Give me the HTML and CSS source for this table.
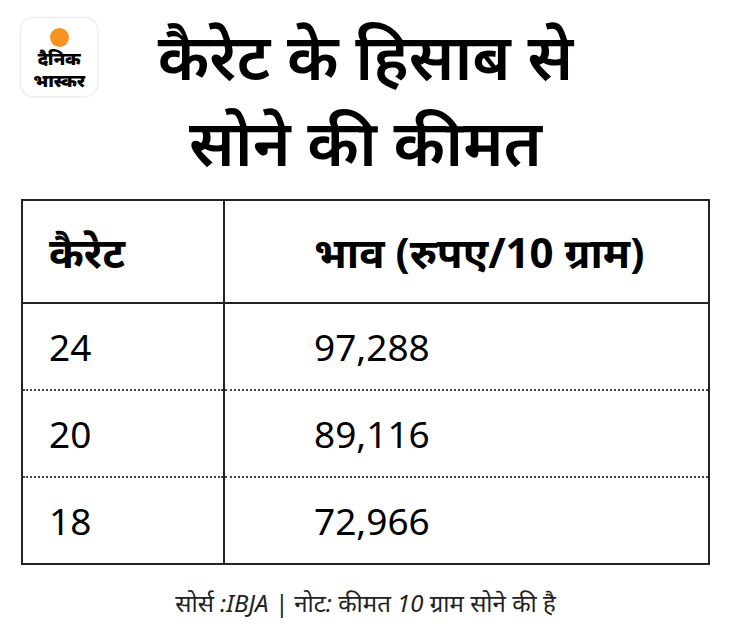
FILE: index.html
```html
<!DOCTYPE html>
<html lang="hi">
<head>
<meta charset="utf-8">
<link rel="stylesheet" href="styles.css">
</head>
<body>
<div class="page">
  <header class="top">
    <div class="logo">
      <span class="sun"></span>
      <span class="brand">दैनिक</span>
      <span class="brand">भास्कर</span>
    </div>
    <h1 class="title">कैरेट के हिसाब से<br>सोने की कीमत</h1>
    <div class="spacer"></div>
  </header>
  <table class="rates">
    <thead>
      <tr><th class="c1">कैरेट</th><th class="c2">भाव (रुपए/10 ग्राम)</th></tr>
    </thead>
    <tbody>
      <tr><td class="c1">24</td><td class="c2">97,288</td></tr>
      <tr><td class="c1">20</td><td class="c2">89,116</td></tr>
      <tr><td class="c1">18</td><td class="c2">72,966</td></tr>
    </tbody>
  </table>
  <p class="note">सोर्स :IBJA | नोट: कीमत 10 ग्राम सोने की है</p>
</div>
</body>
</html>
```
FILE: styles.css
```css
html, body {
  margin: 0;
  padding: 0;
  background: #fff;
}
body {
  font-family: "Noto Sans", "Noto Sans Devanagari", "Lohit Devanagari", sans-serif;
  color: #000;
}
.page {
  width: 730px;
  height: 638px;
  padding: 18px 20px 0 21px;
  box-sizing: border-box;
}
.top {
  display: grid;
  grid-template-columns: 1fr auto 1fr;
  align-items: start;
  height: 181px;
}
.logo {
  width: 76px;
  height: 78px;
  border-radius: 12px;
  box-shadow: 0 0 3px rgba(0,0,0,0.2);
  background: #fff;
  display: flex;
  flex-direction: column;
  align-items: center;
  box-sizing: border-box;
  padding-top: 10px;
}
.sun {
  width: 19px;
  height: 19px;
  border-radius: 50%;
  background: #f7931e;
  margin-bottom: 0;
}
.brand {
  font-weight: 900;
  font-size: 18px;
  line-height: 22px;
  letter-spacing: -0.3px;
}
.title {
  margin: 0;
  font-size: 64px;
  line-height: 86px;
  font-weight: 600;
  text-align: center;
  margin-top: -5px;
  white-space: nowrap;
}
.rates {
  width: 689px;
  border-collapse: collapse;
  border: 2px solid #222;
}
.rates th, .rates td {
  text-align: left;
  padding: 0;
}
.rates th {
  height: 101px;
  font-size: 42px;
  font-weight: 700;
  border-bottom: 2px solid #222;
}
.rates td {
  height: 85px;
  font-size: 37px;
  font-weight: 400;
}
.rates tbody tr + tr td {
  border-top: 2px dotted #444;
}
.c1 {
  width: 174px;
  padding-left: 26px !important;
  border-right: 2px solid #222;
}
.c2 {
  padding-left: 89px !important;
}
.note {
  margin: 21px 0 0;
  text-align: center;
  font-style: italic;
  font-size: 24px;
  color: #222;
}
```
